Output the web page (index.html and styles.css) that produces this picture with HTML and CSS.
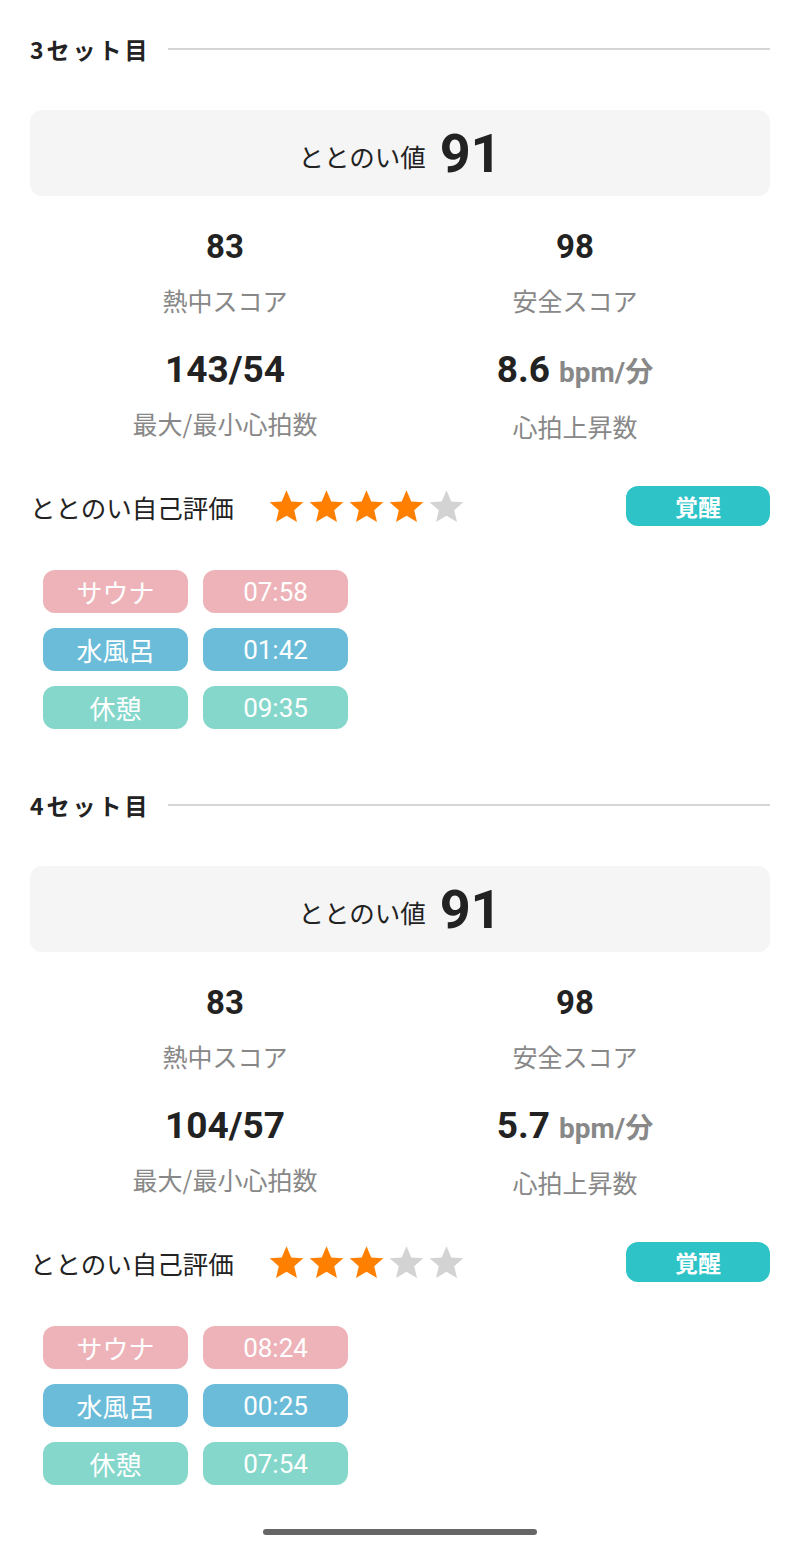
FILE: index.html
```html
<!DOCTYPE html>
<html lang="ja">
<head>
    <meta charset="UTF-8">
    <meta name="viewport" content="width=device-width, initial-scale=1.0">
    <title>セット記録</title>
    <link rel="stylesheet" href="styles.css">
</head>
<body>
    <div class="page">
        <!-- 3セット目 -->
        <section class="set">
            <div class="set-head">
                <h2>3セット目</h2>
                <div class="set-line"></div>
            </div>

            <div class="score-box">
                <span class="score-label">ととのい値</span>
                <span class="score-value">91</span>
            </div>

            <div class="stats">
                <div class="stat">
                    <div class="stat-value">83</div>
                    <div class="stat-label">熱中スコア</div>
                </div>
                <div class="stat">
                    <div class="stat-value">98</div>
                    <div class="stat-label">安全スコア</div>
                </div>
                <div class="stat">
                    <div class="stat-value big">143/54</div>
                    <div class="stat-label">最大/最小心拍数</div>
                </div>
                <div class="stat">
                    <div class="stat-value big">8.6 <span class="unit">bpm/分</span></div>
                    <div class="stat-label">心拍上昇数</div>
                </div>
            </div>

            <div class="rating">
                <span class="rating-label">ととのい自己評価</span>
                <div class="stars">
                    <svg class="star on" viewBox="0 0 24 24"><path d="M12 1.5l3.1 7.2 7.8.6-5.9 5.1 1.8 7.6L12 18l-6.8 4 1.8-7.6-5.9-5.1 7.8-.6z"/></svg>
                    <svg class="star on" viewBox="0 0 24 24"><path d="M12 1.5l3.1 7.2 7.8.6-5.9 5.1 1.8 7.6L12 18l-6.8 4 1.8-7.6-5.9-5.1 7.8-.6z"/></svg>
                    <svg class="star on" viewBox="0 0 24 24"><path d="M12 1.5l3.1 7.2 7.8.6-5.9 5.1 1.8 7.6L12 18l-6.8 4 1.8-7.6-5.9-5.1 7.8-.6z"/></svg>
                    <svg class="star on" viewBox="0 0 24 24"><path d="M12 1.5l3.1 7.2 7.8.6-5.9 5.1 1.8 7.6L12 18l-6.8 4 1.8-7.6-5.9-5.1 7.8-.6z"/></svg>
                    <svg class="star" viewBox="0 0 24 24"><path d="M12 1.5l3.1 7.2 7.8.6-5.9 5.1 1.8 7.6L12 18l-6.8 4 1.8-7.6-5.9-5.1 7.8-.6z"/></svg>
                </div>
                <span class="badge">覚醒</span>
            </div>

            <div class="times">
                <span class="pill sauna">サウナ</span>
                <span class="pill sauna">07:58</span>
                <span class="pill water">水風呂</span>
                <span class="pill water">01:42</span>
                <span class="pill rest">休憩</span>
                <span class="pill rest">09:35</span>
            </div>
        </section>

        <!-- 4セット目 -->
        <section class="set">
            <div class="set-head">
                <h2>4セット目</h2>
                <div class="set-line"></div>
            </div>

            <div class="score-box">
                <span class="score-label">ととのい値</span>
                <span class="score-value">91</span>
            </div>

            <div class="stats">
                <div class="stat">
                    <div class="stat-value">83</div>
                    <div class="stat-label">熱中スコア</div>
                </div>
                <div class="stat">
                    <div class="stat-value">98</div>
                    <div class="stat-label">安全スコア</div>
                </div>
                <div class="stat">
                    <div class="stat-value big">104/57</div>
                    <div class="stat-label">最大/最小心拍数</div>
                </div>
                <div class="stat">
                    <div class="stat-value big">5.7 <span class="unit">bpm/分</span></div>
                    <div class="stat-label">心拍上昇数</div>
                </div>
            </div>

            <div class="rating">
                <span class="rating-label">ととのい自己評価</span>
                <div class="stars">
                    <svg class="star on" viewBox="0 0 24 24"><path d="M12 1.5l3.1 7.2 7.8.6-5.9 5.1 1.8 7.6L12 18l-6.8 4 1.8-7.6-5.9-5.1 7.8-.6z"/></svg>
                    <svg class="star on" viewBox="0 0 24 24"><path d="M12 1.5l3.1 7.2 7.8.6-5.9 5.1 1.8 7.6L12 18l-6.8 4 1.8-7.6-5.9-5.1 7.8-.6z"/></svg>
                    <svg class="star on" viewBox="0 0 24 24"><path d="M12 1.5l3.1 7.2 7.8.6-5.9 5.1 1.8 7.6L12 18l-6.8 4 1.8-7.6-5.9-5.1 7.8-.6z"/></svg>
                    <svg class="star" viewBox="0 0 24 24"><path d="M12 1.5l3.1 7.2 7.8.6-5.9 5.1 1.8 7.6L12 18l-6.8 4 1.8-7.6-5.9-5.1 7.8-.6z"/></svg>
                    <svg class="star" viewBox="0 0 24 24"><path d="M12 1.5l3.1 7.2 7.8.6-5.9 5.1 1.8 7.6L12 18l-6.8 4 1.8-7.6-5.9-5.1 7.8-.6z"/></svg>
                </div>
                <span class="badge">覚醒</span>
            </div>

            <div class="times">
                <span class="pill sauna">サウナ</span>
                <span class="pill sauna">08:24</span>
                <span class="pill water">水風呂</span>
                <span class="pill water">00:25</span>
                <span class="pill rest">休憩</span>
                <span class="pill rest">07:54</span>
            </div>
        </section>

        <div class="home-bar"></div>
    </div>
</body>
</html>
```

FILE: styles.css
```css
/* General styling */
body {
    margin: 0;
    background-color: #ffffff;
    color: #222;
    font-family: Roboto, "Noto Sans CJK JP", sans-serif;
}

.page {
    padding: 0 30px;
}

/* Set header */
.set {
    padding-top: 36px;
}

.set + .set {
    padding-top: 63px;
}

.set-head {
    display: flex;
    align-items: center;
    gap: 17px;
    height: 26px;
}

.set-head h2 {
    margin: 0;
    font-family: "Noto Sans CJK JP", sans-serif;
    font-size: 23px;
    font-weight: 700;
    letter-spacing: 3px;
    line-height: 26px;
    color: #222;
}

.set-line {
    flex: 1;
    height: 2px;
    background-color: #d6d6d6;
}

/* Score box */
.score-box {
    margin-top: 48px;
    height: 86px;
    background-color: #f5f5f5;
    border-radius: 12px;
    display: flex;
    align-items: center;
    justify-content: center;
    gap: 14px;
}

.score-label {
    font-family: "Noto Sans CJK JP", sans-serif;
    font-size: 25.5px;
    padding-top: 4px;
}

.score-value {
    font-size: 54px;
    font-weight: 700;
}

/* Stats */
.stats {
    margin: 30px 20px 0;
    display: grid;
    grid-template-columns: 1fr 1fr;
    row-gap: 31px;
    text-align: center;
}

.stat-value {
    font-size: 33px;
    font-weight: 700;
    line-height: 42px;
}

.stat-value.big {
    font-size: 37px;
}

.stat-value.big + .stat-label {
    margin-top: 14px;
}

.unit {
    font-size: 28px;
    color: #888;
}

.stat-label {
    margin-top: 14px;
    font-family: "Noto Sans CJK JP", sans-serif;
    font-size: 25px;
    line-height: 36px;
    color: #888;
}

/* Rating */
.rating {
    margin-top: 42px;
    display: flex;
    align-items: center;
    height: 40px;
}

.rating-label {
    font-family: "Noto Sans CJK JP", sans-serif;
    font-size: 25.5px;
}

.stars {
    display: flex;
    gap: 3px;
    margin-left: 34px;
}

.star {
    width: 37px;
    height: 37px;
    fill: #d3d3d3;
}

.star.on {
    fill: #ff8000;
}

.badge {
    margin-left: auto;
    width: 144px;
    height: 40px;
    border-radius: 12px;
    background-color: #2ec3c7;
    color: #fff;
    font-family: "Noto Sans CJK JP", sans-serif;
    font-size: 23px;
    font-weight: 700;
    display: flex;
    align-items: center;
    justify-content: center;
}

/* Time pills */
.times {
    margin: 44px 0 0 13px;
    display: grid;
    grid-template-columns: 145px 145px;
    column-gap: 15px;
    row-gap: 15px;
}

.pill {
    height: 43px;
    border-radius: 12px;
    color: #fff;
    font-size: 26px;
    display: flex;
    align-items: center;
    justify-content: center;
}

.pill.sauna {
    background-color: #edb3b8;
}

.pill.water {
    background-color: #6abcd9;
}

.pill.rest {
    background-color: #84d7ca;
}

/* Home indicator */
.home-bar {
    width: 274px;
    height: 6px;
    margin: 44px auto 0;
    border-radius: 3px;
    background-color: #666;
}
```
